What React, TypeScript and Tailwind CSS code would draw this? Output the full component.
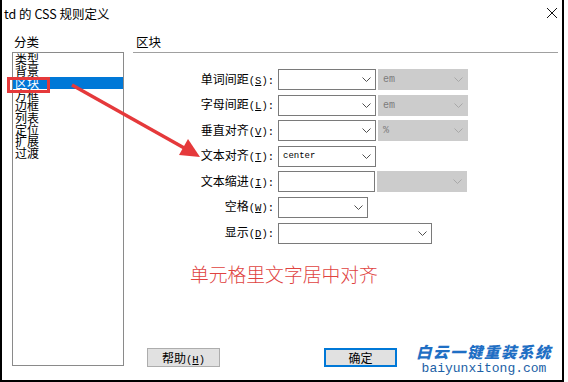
import { ReactNode } from 'react'

const categories = ['类型', '背景', '区块', '方框', '边框', '列表', '定位', '扩展', '过渡']

function Chevron({ light }: { light?: boolean }) {
  return (
    <svg width="9" height="5" viewBox="0 0 9 5" className="shrink-0">
      <polyline points="0.5,0.5 4.5,4.5 8.5,0.5" fill="none" stroke={light ? '#a8a8a8' : '#505050'} strokeWidth="1" />
    </svg>
  )
}

function Select({ w, value, arrow = true }: { w: string; value?: string; arrow?: boolean }) {
  return (
    <div className={`${w} h-[21px] border border-[#7a7a7a] bg-white flex items-center justify-between pl-[4px] pr-[4px]`}>
      <span className="font-['Liberation_Mono',monospace] text-[9px] text-black">{value}</span>
      {arrow && <Chevron />}
    </div>
  )
}

function Unit({ value }: { value?: string }) {
  return (
    <div className="w-[90px] h-[21px] ml-[2px] bg-[#cccccc] flex items-center justify-between pl-[5px] pr-[5px]">
      <span className="font-['Liberation_Mono',monospace] text-[10px] text-[#7c7c7c]">{value}</span>
      <Chevron light />
    </div>
  )
}

function Row({ label, hot, children }: { label: string; hot: string; children: ReactNode }) {
  return (
    <div className="flex items-center h-[21px]">
      <div className="w-[141px] text-right text-[12px] text-black leading-[21px]">
        {label}
        <span className="font-['Liberation_Mono',monospace] text-[10.5px]">
          (<span className="underline">{hot}</span>):
        </span>
      </div>
      <div className="ml-[4px] flex items-center">{children}</div>
    </div>
  )
}

export default function App() {
  return (
    <div className="relative w-[568px] h-[382px] bg-white overflow-hidden font-['Noto_Sans_CJK_SC',sans-serif] text-black">
      <div className="w-[564px] h-[382px] border-l-2 border-r-2 border-b-2 border-black flex flex-col">
        {/* title bar */}
        <div className="h-[31px] flex items-start justify-between pl-[2px] pr-[4px] pt-[5px]">
          <span className="text-[12.5px] leading-[17px]">td 的 CSS 规则定义</span>
          <svg width="12" height="12" viewBox="0 0 12 12" className="mt-[2px]">
            <path d="M1 1 L11 11 M11 1 L1 11" stroke="#111" strokeWidth="1" />
          </svg>
        </div>

        <div className="flex flex-1">
          {/* category list */}
          <div className="ml-[10px] w-[112px] flex flex-col">
            <div className="h-[21px] leading-[21px] text-[12.5px] pl-[2px]">分类</div>
            <div className="h-[314px] border border-[#8a8a8a] pt-[0px] pl-[0px]">
              {categories.map(c => (
                <div
                  key={c}
                  className={`h-[11.6px] leading-[11.6px] text-[12px] pl-[2px] ${c === '区块' ? 'bg-[#0078d7] text-white mt-[1px]' : ''}`}
                >
                  {c}
                </div>
              ))}
            </div>
          </div>

          {/* block panel */}
          <div className="ml-[9px] mr-[4px] flex-1 flex flex-col">
            <div className="h-[22px] leading-[21px] text-[12.5px] pl-[3px] border-b border-[#a0a0a0]">区块</div>

            <div className="mt-[16px] flex flex-col gap-[4.6px]">
              <Row label="单词间距" hot="S">
                <Select w="w-[98px]" />
                <Unit value="em" />
              </Row>
              <Row label="字母间距" hot="L">
                <Select w="w-[98px]" />
                <Unit value="em" />
              </Row>
              <Row label="垂直对齐" hot="V">
                <Select w="w-[98px]" />
                <Unit value="%" />
              </Row>
              <Row label="文本对齐" hot="T">
                <Select w="w-[98px]" value="center" />
              </Row>
              <Row label="文本缩进" hot="I">
                <Select w="w-[97px]" arrow={false} />
                <Unit />
              </Row>
              <Row label="空格" hot="W">
                <Select w="w-[90px]" />
              </Row>
              <Row label="显示" hot="D">
                <Select w="w-[154px]" />
              </Row>
            </div>

            <div className="mt-[19px] pl-[57px] h-[22px] leading-[22px] text-[18.8px] text-[#e0433f] font-light">
              单元格里文字居中对齐
            </div>

            <div className="mt-[63px] flex items-center">
              <button className="ml-[14px] w-[73px] h-[19px] bg-[#e1e1e1] border border-[#adadad] text-[12px] leading-[17px]">
                帮助<span className="font-['Liberation_Mono',monospace] text-[10.5px]">(<span className="underline">H</span>)</span>
              </button>
              <button className="ml-[104px] w-[73px] h-[19px] bg-[#e1e1e1] border-2 border-[#0078d7] text-[12px] leading-[15px]">
                确定
              </button>
            </div>
          </div>
        </div>
      </div>

      {/* annotation overlays */}
      <div className="absolute left-[7px] top-[77px] w-[43px] h-[16px] border-[3px] border-[#e5393b]" />
      <svg className="absolute left-0 top-0 pointer-events-none" width="568" height="382">
        <line x1="72" y1="85" x2="186" y2="149" stroke="#e5393b" strokeWidth="3.5" />
        <polygon points="200,157 179,155 188,139" fill="#e5393b" />
      </svg>

      {/* watermark */}
      <div className="absolute left-[416px] top-[341px] flex flex-col items-center">
        <span className="text-[15.5px] leading-[20px] font-black italic text-[#1f6fc4] tracking-[1.5px]">白云一键重装系统</span>
        <span className="font-['Liberation_Mono',monospace] text-[13px] leading-[16px] text-[#1c5fa6]">baiyunxitong.com</span>
      </div>
    </div>
  )
}
